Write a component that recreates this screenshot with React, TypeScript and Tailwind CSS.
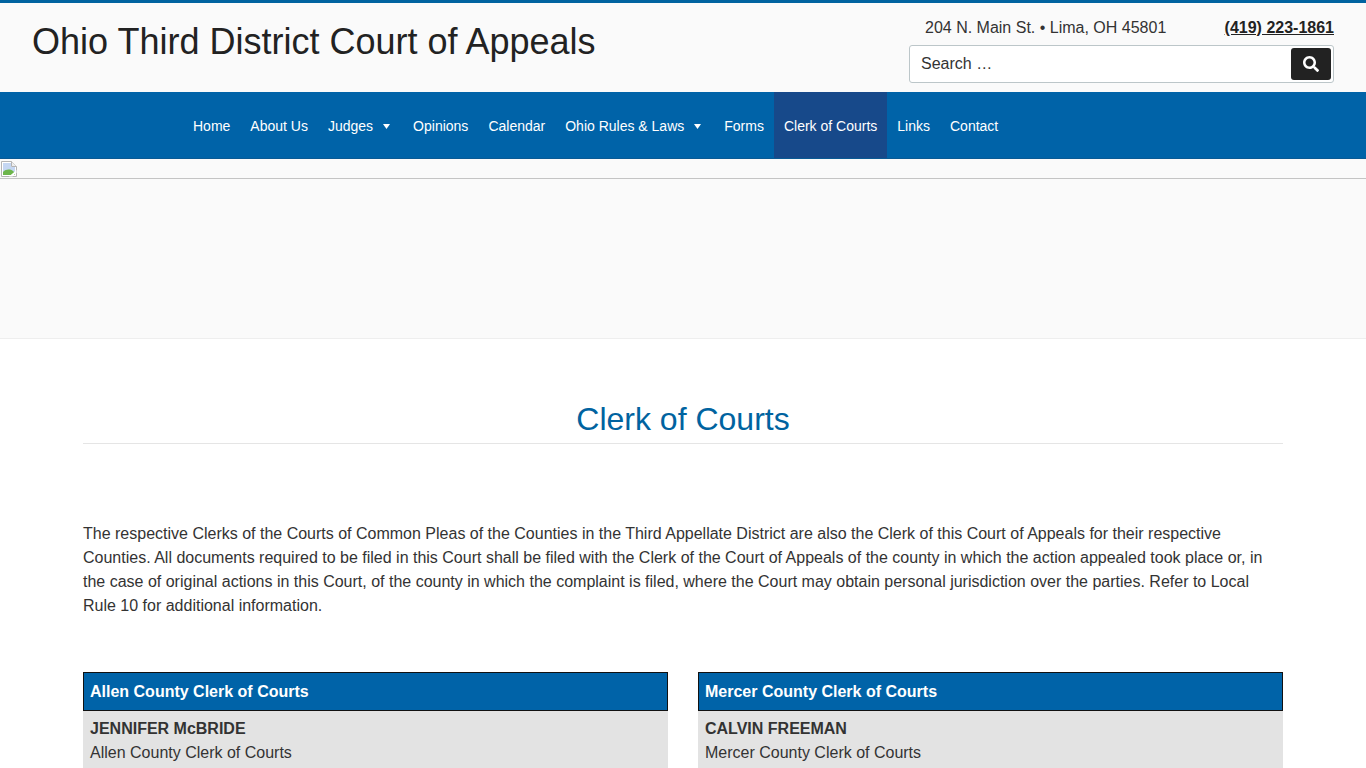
import { FaSearch } from "react-icons/fa";

const navItems = [
  { label: "Home" },
  { label: "About Us" },
  { label: "Judges", caret: true },
  { label: "Opinions" },
  { label: "Calendar" },
  { label: "Ohio Rules & Laws", caret: true },
  { label: "Forms" },
  { label: "Clerk of Courts", active: true },
  { label: "Links" },
  { label: "Contact" },
];

const clerks = [
  { county: "Allen County Clerk of Courts", name: "JENNIFER McBRIDE" },
  { county: "Mercer County Clerk of Courts", name: "CALVIN FREEMAN" },
];

function BrokenImage() {
  return (
    <svg width="16" height="16" viewBox="0 0 16 16" className="block">
      <path d="M0.5 0.5H10.5L15.5 5.5V15.5H0.5Z" fill="#fff" stroke="#b4b4b4" />
      <path d="M10.5 0.5V5.5H15.5" fill="#eee" stroke="#b4b4b4" />
      <path d="M2 2H10V6H14V11H2Z" fill="#c4d6f2" />
      <path d="M2 14V11C5 8 9 8 12 10L14 12V14Z" fill="#6db54c" />
      <path d="M8 15.5L15.5 9V11.5L11.5 15.5Z" fill="#fff" />
    </svg>
  );
}

function ClerkCard({ county, name }: { county: string; name: string }) {
  return (
    <div>
      <div className="h-[39px] bg-[#0063a8] border border-[#111] px-[6px] flex items-center">
        <span className="text-white font-bold text-base">{county}</span>
      </div>
      <div className="bg-[#e3e3e3] px-[7px] pt-[6px] pb-6 text-[#333] text-base leading-6">
        <div className="font-bold">{name}</div>
        <div>{county}</div>
      </div>
    </div>
  );
}

export default function App() {
  return (
    <div className="h-[768px] overflow-hidden bg-white font-['Liberation_Sans',Arial,sans-serif]">
      <header className="h-[92px] bg-[#fafafa] border-t-[3px] border-[#0063a0] flex justify-between pl-8 pr-8">
        <div className="text-[36px] leading-[40px] text-[#222] pt-[19px]">Ohio Third District Court of Appeals</div>
        <div className="w-[425px] pt-[15px]">
          <div className="flex justify-between pl-4 text-base leading-[20px] text-[#333]">
            <span>204 N. Main St. • Lima, OH 45801</span>
            <a className="font-bold text-[#222] underline">(419) 223-1861</a>
          </div>
          <div className="mt-[7px] h-[38px] bg-white border border-[#bcc6c9] rounded-[3px] flex items-center justify-between pl-[11px] pr-[2px]">
            <span className="text-base text-[#333]">Search …</span>
            <button className="w-10 h-8 bg-[#222] rounded-[3px] flex items-center justify-center">
              <FaSearch size={16} className="text-white" />
            </button>
          </div>
        </div>
      </header>

      <nav className="h-[67px] bg-[#0063a8] flex pl-[183px] border-b border-[#0a5a94]">
        {navItems.map((item) => (
          <a
            key={item.label}
            className={`flex items-center px-[10px] pt-[2px] text-[14px] text-white ${item.active ? "bg-[#17498a]" : ""}`}
          >
            {item.label}
            {item.caret && (
              <svg width="7" height="5" viewBox="0 0 7 5" className="ml-[10px] mr-[3px]">
                <path d="M0 0H7L3.5 5Z" fill="#fff" />
              </svg>
            )}
          </a>
        ))}
      </nav>

      <div className="h-[180px] bg-[#fafafa] border-b border-[#eee]">
        <div className="h-[20px] border-b border-[#c4c4c4] pl-[1px] pt-[2px]">
          <BrokenImage />
        </div>
      </div>

      <main className="px-[83px]">
        <h1 className="mt-[61px] pb-[5px] text-center text-[32px] leading-[38px] text-[#0063a0] border-b border-[#e5e5e5]">
          Clerk of Courts
        </h1>
        <p className="mt-[78px] text-base leading-6 text-[#333]">
          The respective Clerks of the Courts of Common Pleas of the Counties in the Third Appellate District are also the Clerk of this Court of Appeals for their respective Counties. All documents required to be filed in this Court shall be filed with the Clerk of the Court of Appeals of the county in which the action appealed took place or, in the case of original actions in this Court, of the county in which the complaint is filed, where the Court may obtain personal jurisdiction over the parties. Refer to Local Rule 10 for additional information.
        </p>
        <div className="mt-[54px] grid grid-cols-2 gap-[30px]">
          {clerks.map((c) => (
            <ClerkCard key={c.county} county={c.county} name={c.name} />
          ))}
        </div>
      </main>
    </div>
  );
}
